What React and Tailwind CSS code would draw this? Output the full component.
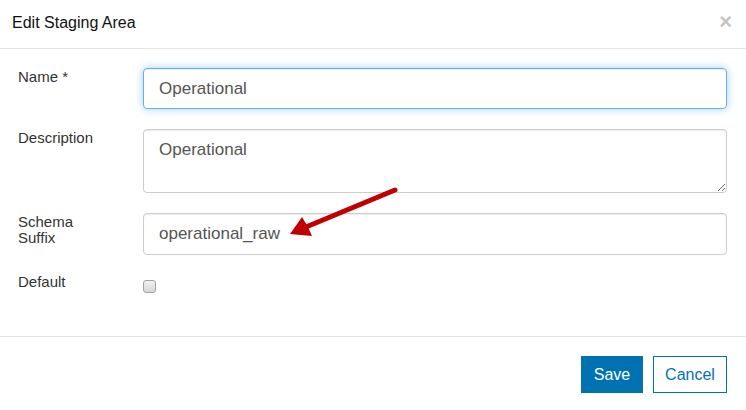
// App.jsx
import React from "react";

export default function App() {
  const Label = ({ children }) => (
    <label className="w-[125px] shrink-0 text-[15px] leading-[16px] text-[#333] pt-[1px]">{children}</label>
  );

  return (
    <div className="relative w-[746px] h-[410px] bg-white flex flex-col font-['Liberation_Sans',Arial,sans-serif] overflow-hidden">
      {/* Header */}
      <div className="h-[49px] shrink-0 flex items-center justify-between pl-[12px] pr-[14px] border-b border-[#e5e5e5]">
        <h4 className="text-[16px] text-[#111] pb-[3px]">Edit Staging Area</h4>
        <span className="text-[22px] font-bold leading-none text-[#c4c4c4] pb-[5px]">×</span>
      </div>

      {/* Body */}
      <div className="flex-1 flex flex-col gap-[20px] pt-[19px] pl-[18px] pr-[19px]">
        <div className="flex items-start">
          <Label>Name *</Label>
          <input
            readOnly
            value="Operational"
            className="flex-1 h-[41px] px-[15px] text-[17px] text-[#555] rounded-[4px] border border-[#66afe9] outline-none shadow-[inset_0_1px_1px_rgba(0,0,0,0.075),0_0_8px_rgba(102,175,233,0.6)]"
          />
        </div>

        <div className="flex items-start">
          <Label>Description</Label>
          <textarea
            readOnly
            value="Operational"
            className="flex-1 h-[64px] px-[15px] pt-[8px] text-[17px] leading-[24px] text-[#555] rounded-[4px] border border-[#ccc] outline-none shadow-[inset_0_1px_1px_rgba(0,0,0,0.075)]"
          />
        </div>

        <div className="flex items-start">
          <Label>
            Schema
            <br />
            Suffix
          </Label>
          <input
            readOnly
            value="operational_raw"
            className="flex-1 h-[42px] px-[15px] text-[17px] text-[#555] rounded-[4px] border border-[#ccc] outline-none shadow-[inset_0_1px_1px_rgba(0,0,0,0.075)]"
          />
        </div>

        <div className="flex items-start -mt-[2px]">
          <Label>Default</Label>
          <div className="mt-[7px] w-[13px] h-[13px] rounded-[3px] border border-[#a3a3a3] bg-gradient-to-b from-[#f2f2f2] to-[#d6d6d6]" />
        </div>
      </div>

      {/* Footer */}
      <div className="shrink-0 flex justify-end gap-[10px] border-t border-[#e5e5e5] pt-[19px] pb-[17px] pr-[19px]">
        <button type="button" className="w-[62px] h-[37px] bg-[#0072b1] text-white text-[16px]">
          Save
        </button>
        <button type="button" className="w-[74px] h-[37px] bg-white border border-[#0072b1] text-[#0072b1] text-[16px]">
          Cancel
        </button>
      </div>

      {/* Annotation arrow */}
      <svg className="absolute left-0 top-0 pointer-events-none" width="746" height="410">
        <line x1="395" y1="190" x2="306" y2="227" stroke="#c00000" strokeWidth="5" strokeLinecap="round" />
        <polygon points="290,234 302,217 308,227 312,236" fill="#c00000" />
      </svg>
    </div>
  );
}
